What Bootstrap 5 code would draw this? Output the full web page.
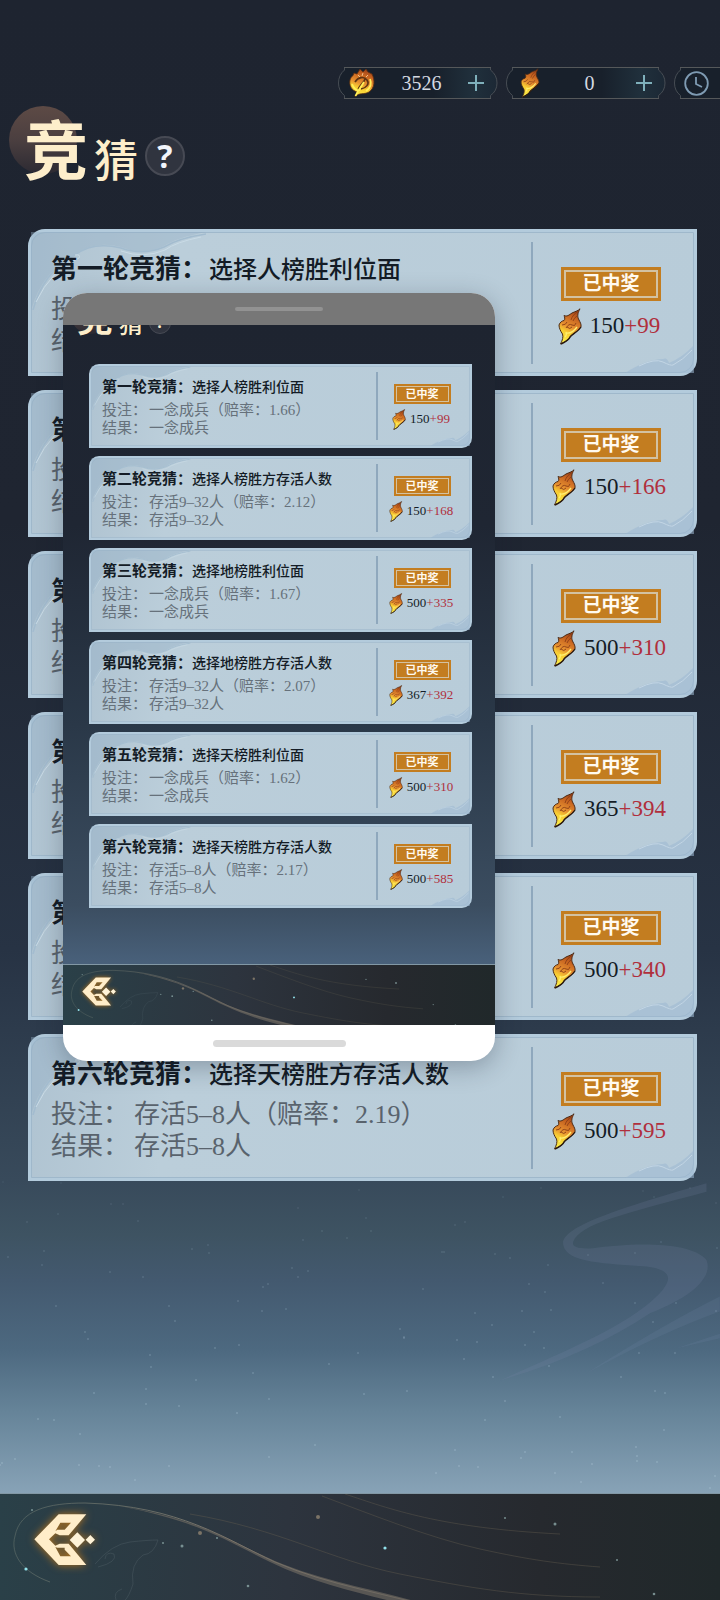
<!DOCTYPE html>
<html lang="zh-CN">
<head>
<meta charset="utf-8">
<meta name="viewport" content="width=device-width, initial-scale=1">
<title>竞猜</title>
<link href="https://cdn.jsdelivr.net/npm/bootstrap@5.3.0/dist/css/bootstrap.min.css" rel="stylesheet">
<style>
body{font-family:"Liberation Serif","Noto Sans CJK SC",serif;background:#1e2430;color:#141c26}
.game{min-height:100vh;overflow:hidden;background:linear-gradient(#1e2430 0,#1f2531 520px,#273344 950px,#384a5b 1180px,#3e5362 1235px,#43596f 1280px,#4d6980 1350px,#658398 1410px,#88a3b7 1494px)}
.top-bar{padding-top:67px;gap:9px}
.pill{width:159px;height:32px;color:#d5dae2;font-size:20px;padding:0 13px 0 11px}
.pill.cut{width:46px;overflow:hidden;padding-left:10px}
.pill .frame{left:0;top:0;width:160px;height:32px}
.pill>*:not(.frame){position:relative}
.bare{background:none;border:0;padding:0;line-height:0;color:inherit}
.heading{height:130px;padding:18px 0 0 24px;color:#fdeecb}
.heading .disc{left:9px;top:7px;width:68px;height:68px}
.disc{border-radius:50%;background:linear-gradient(#5d4a45,#4b3f40 50%,#2c2a32)}
.heading h1{gap:6px;z-index:1}
.glyph-a{font-size:64px;line-height:72px;font-weight:700}
.glyph-b{font-size:44px;line-height:52px;font-weight:500}
.help{width:40px;height:40px;border-radius:50%;background:#30343f;border:2px solid #474a54;color:#f2f5fb;font:700 32px/34px "Open Sans",sans-serif;margin:19px 0 0 7px}
.bets{padding:0 23px 0 28px;gap:14px}
.bet{height:147px;padding:20px 0 0 20px;background:linear-gradient(100deg,#afc3d1,#bbceda 22%,#b8ccd9);border:3px solid #b3cbdc;border-radius:17px 0 17px 0}
.bet::before{content:"";position:absolute;inset:0;border:1px solid #9fb8cb;border-radius:14px 0 14px 0}
.bet .wave-a{left:0;top:0;width:175px;height:78px}
.bet .wave-b{right:0;bottom:0;width:69px;height:28px}
.bet h2{font-size:26px;line-height:36px;margin:0 0 6px;font-weight:700}
.bet h2 span{font-size:24px;font-weight:500;margin-left:2px}
.bet p{font-size:26px;line-height:32px;margin:0;color:#59636d}
.bet p span{margin-left:5px}
.prize{width:163px;border-left:2px solid #8fa8bd;margin:-10px 0 9px;padding:25px 5px 0 0}
.won{width:100px;height:34px;background:#c37d20;border:3px solid #c37d20;box-shadow:inset 0 0 0 2px #d3c2a2;color:#fffaf0;font-size:19px;line-height:28px;font-weight:700}
.sum{font-size:23px;line-height:38px;gap:8px;margin-top:6px;padding-right:4px}
.sum b{font-weight:400;color:#b02f3c}
.sum svg{width:24px;height:37px}
.dock{height:107px;background:linear-gradient(90deg,#2a4048,#2d343e 40%,#26292e 75%,#20282a);border-top:1px solid #8298a5}
.dock .art{left:0;top:0;width:100%;height:100%}
.dock .back{margin-left:32px;filter:drop-shadow(0 0 4px #b9761c)}
.dock .back svg{width:65px;height:55px}
.swirl{right:0;bottom:107px;width:360px;height:313px}
.dust{left:0;bottom:107px;width:100%;height:313px}
/* floating copy of the same screen at a smaller scale */
.floater{left:63px;top:293px;width:60%;border-radius:24px;background:#fff;box-shadow:0 6px 26px rgba(20,30,45,.3);z-index:5}
.grab{height:32px;background:#777}
.grab i{width:88px;height:4px;border-radius:2px;background:#929292}
.home{height:36px}
.home i{width:133px;height:7px;border-radius:4px;background:#dadada}
.view{background:linear-gradient(#1e2430 0,#1f2633 200px,#2a3848 400px,#3b4d60 580px,#49617b 640px)}
.mini-head{height:16px;margin-bottom:23px;padding-left:14px;color:#fdeecb;gap:6px}
.mini-head .disc{left:8px;bottom:7px;width:39px;height:39px}
.mini-head .glyph-a{font-size:36px;line-height:42px}
.mini-head .glyph-b{font-size:24px;line-height:32px}
.mini-head .q{width:22px;height:22px;border-radius:50%;background:#30343f;border:1px solid #474a54;font:700 16px/18px "Open Sans",sans-serif;margin-bottom:7px}
.view .bets{padding:0 23px 56px 26px;gap:8px}
.view .bet{height:84px;padding:11px 0 0 11px;border-width:2px;border-radius:10px 0 10px 0}
.view .bet::before{border-radius:8px 0 8px 0;opacity:.6}
.view .bet .wave-a{width:100px;height:44px}
.view .bet .wave-b{width:40px;height:16px}
.view .bet h2{font-size:15px;line-height:20px;margin-bottom:3px}
.view .bet h2 span{font-size:14px;margin-left:0}
.view .bet p{font-size:15px;line-height:18px;color:#66717b}
.view .bet p span{margin-left:2px}
.view .prize{width:94px;margin:-5px 0 6px;padding:12px 4px 0 0}
.view .won{width:57px;height:20px;border-width:2px;box-shadow:inset 0 0 0 1px #d3c2a2;font-size:11px;line-height:16px}
.view .sum{font-size:13px;line-height:22px;gap:4px;margin-top:4px;padding-right:2px}
.view .sum svg{width:14px;height:21px}
.view .dock{height:61px}
.view .dock .back{margin:-8px 0 0 18px;filter:drop-shadow(0 0 2px #b9761c)}
.view .dock .back svg{width:36px;height:31px}
</style>
</head>
<body>
<svg width="0" height="0" class="position-absolute" aria-hidden="true">
  <defs>
    <linearGradient id="fire" x1=".6" y1="0" x2=".3" y2="1"><stop offset="0" stop-color="#9a4219"/><stop offset=".2" stop-color="#c5611f"/><stop offset=".5" stop-color="#e69030"/><stop offset=".68" stop-color="#f8cd32"/><stop offset="1" stop-color="#fbf04a"/></linearGradient>
    <linearGradient id="pillFill"><stop offset="0" stop-color="#18202b"/><stop offset=".6" stop-color="#18202b"/><stop offset=".85" stop-color="#20303c"/><stop offset="1" stop-color="#1c2835"/></linearGradient>
    <linearGradient id="trail"><stop offset="0" stop-color="#6d7a72" stop-opacity=".5"/><stop offset=".5" stop-color="#7d776c"/><stop offset="1" stop-color="#6d675e" stop-opacity=".7"/></linearGradient>
  </defs>
  <symbol id="flame" viewBox="0 0 24 37">
    <path d="M22 .8C19 6 19.500 9 21 12C22 14 23.500 16 23 19C20 24 14 26 12 29C11 32 7 34 2.500 36C4.500 32 5.500 29 4.500 26C2.500 23 1 20 1 17C2 14 4 13 6 12.500C7.500 11 6.500 9 6 7.500C9 9 11 7 14 5C17 3.500 20 3 22 .8Z" fill="url(#fire)" stroke="#4b2b16" stroke-linejoin="round"/>
    <path d="M21 3C17 5 14 8 13 12M19 8Q16 10 15 13M4 17Q8 17 9 14M8 20Q11 15 14 17T18 15M9 19Q12 22 14 19" fill="none" stroke="#8a3d16" stroke-width=".9"/>
    <path d="M23 19C20 24 14 26 12 29C11 32 7 34 3 36" fill="none" stroke="#2b1a10" stroke-width="1.400"/>
    <path d="M8 25C12 26 16 23 19 19M7 29Q9 27 8 24" fill="none" stroke="#ffef70" stroke-width="1.300"/>
  </symbol>
  <symbol id="coin" viewBox="0 0 26 30">
    <path d="M6 29L8 24C2 22 0 17 1 12C2 8 4 9 5 5L8 6L11 1L14 4L17 1L19 4L23 6C26 12 26 20 20 24C15 27 10 24 6 29Z" fill="url(#fire)" stroke="#5a2d12" stroke-width=".8"/>
    <path d="M9 22C10 17 15 15 16 11M6 14C9 9 15 8 18 12S17 20 12 21" fill="none" stroke="#5d3413" stroke-width="1.600"/>
    <path d="M9 7l2 2M14 5l-1 3M19 7l-2 2" fill="none" stroke="#f0c08a" stroke-width="1"/>
    <path d="M6.500 28C9 22 12 19 15 14M3 16C5 21 8 23 11 22M21 11Q24 18 17 23" fill="none" stroke="#fff05a" stroke-width="1.800"/>
  </symbol>
  <symbol id="pillFrame" viewBox="0 0 160 32">
    <path d="M6.500.5H152.500V3Q159 8 159 16T152.500 28.500V31.500H6.500V28.500Q.5 24 .5 16T6.500 3Z" fill="url(#pillFill)" stroke="#474d54"/>
    <path d="M6 .5H153M6 31.500H153" stroke="#55585a" fill="none"/>
  </symbol>
  <symbol id="plus" viewBox="0 0 16 16"><path d="M8 0V16M0 8H16" stroke="#7fb0bb" stroke-width="2"/></symbol>
  <symbol id="arrow" viewBox="95 100 195 165">
    <path fill="#ffedc9" fill-rule="evenodd" d="M102 182L175 107H258L205 170H178L165 164L146 182L165 201L178 195H205L258 259H175ZM180 132H212L193 153H171L165 158ZM180 233H212L193 213V207H171L165 205Z"/>
    <path fill="#fff3d8" d="M208 184L231 161L254 184L231 207ZM256 183L270 169L284 183L270 197Z"/>
  </symbol>
  <symbol id="waveA" viewBox="0 0 175 78">
    <path d="M0 0H175Q145 6 133 14Q112 24 90 15Q62 8 44 23Q12 38 0 78Z" fill="#93aec6" opacity=".4"/>
    <path d="M175 2Q148 6 133 15Q112 24 90 16Q62 9 44 23Q12 40 2 78" fill="none" stroke="#a3bccf" stroke-width="1.500"/>
    <path d="M44 23Q50 22 48 26Q20 38 5 70M170 5Q145 10 134 18Q112 27 90 19" fill="none" stroke="#c9dbe6"/>
  </symbol>
  <symbol id="waveB" viewBox="0 0 69 28">
    <path d="M0 28Q22 14 38 14Q42 12 44 18Q58 12 69 0V28Z" fill="#9db8d1" opacity=".55"/>
    <path d="M14 21Q30 13 38 17T48 20Q58 15 67 5" fill="none" stroke="#c3d6e5"/>
  </symbol>
  <symbol id="dockArt" viewBox="0 0 720 106" preserveAspectRatio="xMinYMin slice">
    <path d="M50 88C22 78 10 60 15 42C20 16 48 9 85 9C180 12 225 45 275 68C330 92 390 100 450 118" fill="none" stroke="url(#trail)" stroke-width="1"/>
    <path d="M120 12C200 25 225 45 275 67C330 90 390 98 430 112L410 112C370 101 320 92 270 68C225 46 200 28 120 12Z" fill="#777065" opacity=".6"/>
    <path d="M190 20C280 35 330 66 400 80S520 103 600 103M322 2C370 20 430 44 480 55S560 70 600 73M345 0C390 15 440 34 560 40" fill="none" stroke="#67604f" stroke-opacity=".4"/>
    <path d="M95 70Q112 50 130 48T158 46Q154 60 143 61Q130 70 133 90Q125 115 116 106Q113 98 122 95M98 73Q118 68 114 60Q106 57 105 65" fill="none" stroke="#526269" stroke-opacity=".4"/>
    <g fill="#8ba6a6" opacity=".8"><circle cx="32" cy="16" r="1"/><circle cx="163" cy="49" r="1"/><circle cx="182" cy="52" r="1.500"/><circle cx="217" cy="44" r="1"/><circle cx="248" cy="92" r="1.300"/><circle cx="654" cy="100" r="1.300"/><circle cx="617" cy="66" r="1"/><circle cx="555" cy="30" r="1.500"/><circle cx="505" cy="24" r="1"/></g>
    <g fill="#7b7366"><circle cx="318" cy="23" r="2"/><circle cx="200" cy="39" r="2"/></g>
    <g fill="#92e2ec"><circle cx="26" cy="75" r="1.600"/><circle cx="385" cy="54" r="1.600"/></g>
  </symbol>
</svg>

<div class="game position-relative d-flex flex-column">
  <svg class="dust position-absolute" id="dust" viewBox="0 0 720 313" preserveAspectRatio="none" fill="#a9c3d4" aria-hidden="true"></svg>
  <svg class="swirl position-absolute" viewBox="0 0 1080 940" fill="#7b8bad" aria-hidden="true">
    <path opacity=".17" d="M1040 10C720 100 600 150 610 195C620 250 740 250 860 260C940 270 940 300 890 350C800 440 600 520 420 602C600 550 750 480 870 400C1000 350 1060 290 1040 240C990 180 800 190 700 205C650 208 635 200 640 185C660 130 800 100 1040 35Z"/>
    <path opacity=".15" d="M680 580Q900 440 1080 350V395Q900 460 680 580ZM950 505L1080 462V475Z"/>
  </svg>

  <header class="position-relative">
    <div class="top-bar d-flex justify-content-end">
      <div class="pill position-relative d-flex align-items-center justify-content-between">
        <svg class="frame position-absolute"><use href="#pillFrame"/></svg>
        <svg width="26" height="30"><use href="#coin"/></svg><span>3526</span>
        <button class="bare" aria-label="增加"><svg width="16" height="16"><use href="#plus"/></svg></button>
      </div>
      <div class="pill position-relative d-flex align-items-center justify-content-between">
        <svg class="frame position-absolute"><use href="#pillFrame"/></svg>
        <svg width="26" height="30"><use href="#flame"/></svg><span>0</span>
        <button class="bare" aria-label="增加"><svg width="16" height="16"><use href="#plus"/></svg></button>
      </div>
      <div class="pill cut position-relative d-flex align-items-center">
        <svg class="frame position-absolute"><use href="#pillFrame"/></svg>
        <button class="bare" aria-label="记录"><svg width="25" height="25" viewBox="0 0 25 25" fill="none" stroke="#7f9bb3" stroke-width="1.800"><circle cx="12.500" cy="12.500" r="11.300"/><path d="M12 6V13L18 16"/></svg></button>
      </div>
    </div>
    <div class="heading position-relative d-flex align-items-start">
      <span class="disc position-absolute"></span>
      <h1 class="d-flex align-items-end m-0 position-relative"><span class="glyph-a">竞</span><span class="glyph-b">猜</span></h1>
      <button class="help p-0" aria-label="帮助">?</button>
    </div>
  </header>

  <main class="bets d-flex flex-column position-relative" id="bets"></main>

  <section class="floater position-absolute overflow-hidden">
    <div class="grab d-flex align-items-center justify-content-center"><i></i></div>
    <div class="view">
      <div class="mini-head position-relative d-flex align-items-end overflow-hidden">
        <span class="disc position-absolute"></span>
        <span class="glyph-a position-relative fw-bold">竞</span><span class="glyph-b position-relative">猜</span>
        <span class="q text-center">?</span>
      </div>
      <div class="bets d-flex flex-column" id="miniBets"></div>
      <div class="dock position-relative d-flex align-items-center">
        <svg class="art position-absolute"><use href="#dockArt"/></svg>
        <button class="bare back position-relative" aria-label="返回"><svg><use href="#arrow"/></svg></button>
      </div>
    </div>
    <div class="home d-flex align-items-center justify-content-center"><i></i></div>
  </section>

  <footer class="dock position-relative d-flex align-items-center mt-auto">
    <svg class="art position-absolute"><use href="#dockArt"/></svg>
    <button class="bare back position-relative mb-3" aria-label="返回"><svg><use href="#arrow"/></svg></button>
  </footer>
</div>

<script src="https://cdn.jsdelivr.net/npm/bootstrap@5.3.0/dist/js/bootstrap.bundle.min.js"></script>
<script>
const rounds = [
  ['一', '选择人榜胜利位面', '一念成兵'],
  ['二', '选择人榜胜方存活人数', '存活9–32人'],
  ['三', '选择地榜胜利位面', '一念成兵'],
  ['四', '选择地榜胜方存活人数', '存活9–32人'],
  ['五', '选择天榜胜利位面', '一念成兵'],
  ['六', '选择天榜胜方存活人数', '存活5–8人']
];
// odds, stake, winnings
const current = [['1.66',150,99],['2.11',150,166],['1.62',500,310],['2.08',365,394],['1.68',500,340],['2.19',500,595]];
const earlier = [['1.66',150,99],['2.12',150,168],['1.67',500,335],['2.07',367,392],['1.62',500,310],['2.17',500,585]];
const card = ([no, title, pick], [odds, stake, win]) => `
  <article class="bet position-relative d-flex justify-content-between">
    <svg class="wave-a position-absolute"><use href="#waveA"/></svg>
    <svg class="wave-b position-absolute"><use href="#waveB"/></svg>
    <div class="position-relative text-nowrap">
      <h2>第${no}轮竞猜：<span>${title}</span></h2>
      <p>投注：<span>${pick}（赔率：${odds}）</span></p>
      <p>结果：<span>${pick}</span></p>
    </div>
    <div class="prize position-relative d-flex flex-column align-items-center flex-shrink-0">
      <div class="won text-center">已中奖</div>
      <div class="sum d-flex align-items-center"><svg><use href="#flame"/></svg><span>${stake}<b>+${win}</b></span></div>
    </div>
  </article>`;
document.getElementById('bets').innerHTML = rounds.map((r, i) => card(r, current[i])).join('');
document.getElementById('miniBets').innerHTML = rounds.map((r, i) => card(r, earlier[i])).join('');

// dust motes, brighter toward the horizon
let seed = 7, motes = '';
const rnd = () => (seed = seed * 16807 % 2147483647) / 2147483647;
for (let i = 0; i < 130; i++) {
  const x = Math.round(rnd() * 720), y = Math.round(rnd() * 310);
  motes += `<circle cx="${x}" cy="${y}" r="1" opacity="${(0.08 + y / 900).toFixed(2)}"/>`;
}
document.getElementById('dust').innerHTML = motes;
</script>
</body>
</html>
